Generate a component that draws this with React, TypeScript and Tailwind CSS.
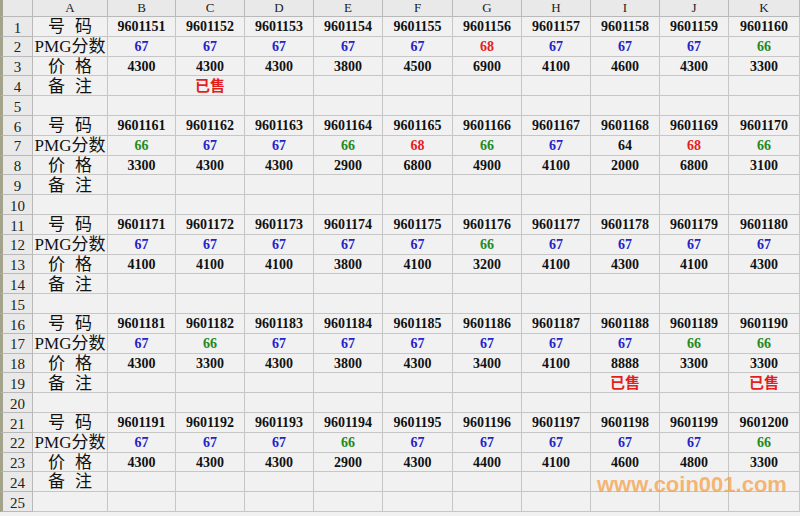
import React from "react";

type Pmg = { v: number; c: "b" | "g" | "r" | "k" };

interface Block {
  start: number;
  pmg: Pmg[];
  price: number[];
  sold: number[];
}

const b = (v: number): Pmg => ({ v, c: "b" });
const g = (v: number): Pmg => ({ v, c: "g" });
const r = (v: number): Pmg => ({ v, c: "r" });
const k = (v: number): Pmg => ({ v, c: "k" });

const blocks: Block[] = [
  {
    start: 9601151,
    pmg: [b(67), b(67), b(67), b(67), b(67), r(68), b(67), b(67), b(67), g(66)],
    price: [4300, 4300, 4300, 3800, 4500, 6900, 4100, 4600, 4300, 3300],
    sold: [1],
  },
  {
    start: 9601161,
    pmg: [g(66), b(67), b(67), g(66), r(68), g(66), b(67), k(64), r(68), g(66)],
    price: [3300, 4300, 4300, 2900, 6800, 4900, 4100, 2000, 6800, 3100],
    sold: [],
  },
  {
    start: 9601171,
    pmg: [b(67), b(67), b(67), b(67), b(67), g(66), b(67), b(67), b(67), b(67)],
    price: [4100, 4100, 4100, 3800, 4100, 3200, 4100, 4300, 4100, 4300],
    sold: [],
  },
  {
    start: 9601181,
    pmg: [b(67), g(66), b(67), b(67), b(67), b(67), b(67), b(67), g(66), g(66)],
    price: [4300, 3300, 4300, 3800, 4300, 3400, 4100, 8888, 3300, 3300],
    sold: [7, 9],
  },
  {
    start: 9601191,
    pmg: [b(67), b(67), b(67), g(66), b(67), b(67), b(67), b(67), b(67), g(66)],
    price: [4300, 4300, 4300, 2900, 4300, 4400, 4100, 4600, 4800, 3300],
    sold: [],
  },
];

const letters = ["A", "B", "C", "D", "E", "F", "G", "H", "I", "J", "K"];

const colorClass = {
  b: "text-[#2424c8]",
  g: "text-[#238a23]",
  r: "text-[#e41e1e]",
  k: "text-[#111111]",
};

const cell =
  "flex items-center justify-center border-r border-b border-[#c6c6c6] bg-[#f1f1f1] overflow-hidden whitespace-nowrap pt-[1px]";
const rowHead =
  "flex items-center justify-center border-l-[3px] border-l-[#a3a38c] border-r border-b border-[#b9b9b9] bg-[#e9e9e9] text-[15px] text-[#222] pt-[3px]";
const num = "text-[14px] font-bold text-[#111]";

function Spaced({ a, z }: { a: string; z: string }) {
  return (
    <span className="flex gap-[10px] text-[17px] text-[#111]">
      <span>{a}</span>
      <span>{z}</span>
    </span>
  );
}

export default function App() {
  const rows: React.ReactNode[] = [];

  blocks.forEach((blk, bi) => {
    const base = bi * 5 + 1;
    // 号码
    rows.push(
      <React.Fragment key={`n${bi}`}>
        <div className={rowHead}>{base}</div>
        <div className={cell}>
          <Spaced a="号" z="码" />
        </div>
        {blk.pmg.map((_, i) => (
          <div key={i} className={`${cell} ${num}`}>
            {blk.start + i}
          </div>
        ))}
      </React.Fragment>
    );
    // PMG
    rows.push(
      <React.Fragment key={`p${bi}`}>
        <div className={rowHead}>{base + 1}</div>
        <div className={`${cell} text-[17px] text-[#111]`}>PMG分数</div>
        {blk.pmg.map((p, i) => (
          <div key={i} className={`${cell} text-[14px] font-bold ${colorClass[p.c]}`}>
            {p.v}
          </div>
        ))}
      </React.Fragment>
    );
    // 价格
    rows.push(
      <React.Fragment key={`q${bi}`}>
        <div className={rowHead}>{base + 2}</div>
        <div className={cell}>
          <Spaced a="价" z="格" />
        </div>
        {blk.price.map((v, i) => (
          <div key={i} className={`${cell} ${num}`}>
            {v}
          </div>
        ))}
      </React.Fragment>
    );
    // 备注
    rows.push(
      <React.Fragment key={`s${bi}`}>
        <div className={rowHead}>{base + 3}</div>
        <div className={cell}>
          <Spaced a="备" z="注" />
        </div>
        {blk.price.map((_, i) => (
          <div key={i} className={`${cell} text-[15px] font-bold text-[#e41e1e]`}>
            {blk.sold.includes(i) ? "已售" : ""}
          </div>
        ))}
      </React.Fragment>
    );
    // blank row
    const blankNo = base + 4;
    rows.push(
      <React.Fragment key={`e${bi}`}>
        <div className={blankNo === 20 ? `${rowHead} bg-[#d8d5b6]` : rowHead}>
          {blankNo}
        </div>
        {letters.map((l) => (
          <div key={l} className={cell} />
        ))}
      </React.Fragment>
    );
  });

  return (
    <div
      className="relative h-[516px] w-[800px] overflow-hidden bg-[#f1f1f1]"
      style={{ fontFamily: '"Liberation Serif", "Noto Sans CJK SC", serif' }}
    >
      <div className="grid grid-cols-[33px_75px_68px_69px_69px_69px_70px_69px_69px_69px_69px_71px] grid-rows-[17px_repeat(25,19.8px)]">
        <div className="border-l-[3px] border-l-[#a3a38c] border-r border-b border-[#b9b9b9] bg-[#e9e9e9]" />
        {letters.map((l) => (
          <div
            key={l}
            className="flex items-center justify-center border-r border-b border-[#b9b9b9] bg-[#e9e9e9] text-[13px] text-[#222]"
          >
            {l}
          </div>
        ))}
        {rows}
      </div>
      <div
        className="absolute left-[597px] top-[474px] text-[22px] font-bold leading-none text-[#f5a04a]/75"
        style={{ fontFamily: '"Liberation Sans", Arial, sans-serif' }}
      >
        www.coin001.com
      </div>
    </div>
  );
}
